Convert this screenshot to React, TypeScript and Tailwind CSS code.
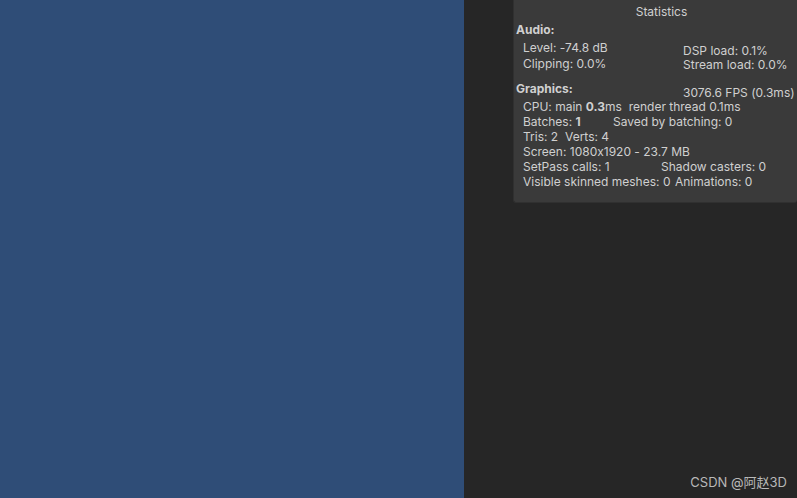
export default function App() {
  return (
    <div className="flex h-[498px] w-[797px] overflow-hidden font-['Inter','Noto_Sans_CJK_SC',sans-serif] text-[12px] text-[#d0d0d0] [font-feature-settings:'calt'_0]">
      {/* game view */}
      <div className="w-[464px] bg-[#2f4d77]" />

      <div className="relative flex-1 bg-[#262626] pl-[49px]">
        {/* stats window */}
        <div className="h-[203px] rounded-b-[3px] border border-t-0 border-r-0 border-[#303030] bg-[#3a3a3a] pl-[2px] leading-[15px]">
          <div className="pl-[10px] pt-[4px] text-center">Statistics</div>
          <div className="mt-[3px] font-bold">Audio:</div>
          <div className="mt-[3px] grid grid-cols-[160px_1fr] pl-[7px]">
            <div className="leading-[16px]">
              <div>Level: -74.8 dB</div>
              <div>Clipping: 0.0%</div>
            </div>
            <div className="pt-[4px] leading-[14px]">
              <div>DSP load: 0.1%</div>
              <div>Stream load: 0.0%</div>
            </div>
          </div>
          <div className="mt-[9px] flex h-[18px]">
            <div className="w-[167px] font-bold">Graphics:</div>
            <div className="pt-[4px]">3076.6 FPS (0.3ms)</div>
          </div>
          <div className="pl-[7px]">
            <div>
              CPU: main <b>0.3</b>ms&nbsp; render thread 0.1ms
            </div>
            <div className="flex">
              <span className="w-[90px]">
                Batches: <b>1</b>
              </span>
              <span>Saved by batching: 0</span>
            </div>
            <div className="flex">
              <span className="w-[42px]">Tris: 2</span>
              <span>Verts: 4</span>
            </div>
            <div>Screen: 1080x1920 - 23.7 MB</div>
            <div className="flex">
              <span className="w-[138px]">SetPass calls: 1</span>
              <span>Shadow casters: 0</span>
            </div>
            <div className="flex">
              <span className="w-[152px]">Visible skinned meshes: 0</span>
              <span>Animations: 0</span>
            </div>
          </div>
        </div>

        <div className="absolute bottom-[6px] right-[10px] text-[13px] text-[#b8b8b8]">
          CSDN @阿赵3D
        </div>
      </div>
    </div>
  );
}
